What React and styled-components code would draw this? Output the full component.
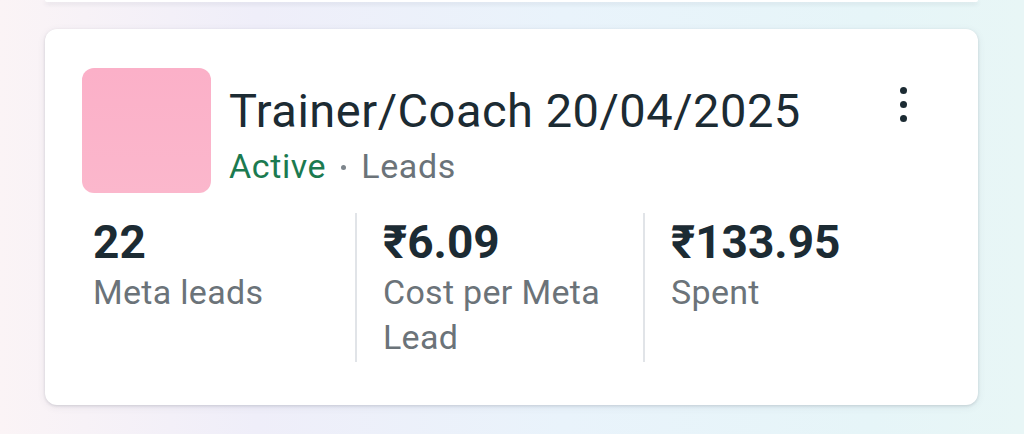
import styled, { createGlobalStyle } from "styled-components";

const GlobalStyle = createGlobalStyle`
  html, body {
    margin: 0;
    padding: 0;
  }
  body {
    font-family: Roboto, "Noto Sans", Arial, sans-serif;
    -webkit-font-smoothing: antialiased;
  }
`;

const stats = [
  { value: "22", label: "Meta leads" },
  { value: "₹6.09", label: "Cost per Meta Lead" },
  { value: "₹133.95", label: "Spent" },
];

function App() {
  return (
    <Page>
      <GlobalStyle />
      <PrevCard />
      <AdCard>
        <Header>
          <Thumb />
          <TitleBlock>
            <Title>Trainer/Coach 20/04/2025</Title>
            <Meta>
              <Status>Active</Status>
              <Dot />
              <span>Leads</span>
            </Meta>
          </TitleBlock>
          <MoreButton aria-label="More">
            <span />
            <span />
            <span />
          </MoreButton>
        </Header>

        <Stats>
          {stats.map((s) => (
            <Stat key={s.label}>
              <Value>{s.value}</Value>
              <Label>{s.label}</Label>
            </Stat>
          ))}
        </Stats>
      </AdCard>
    </Page>
  );
}

const Page = styled.div`
  width: 1024px;
  height: 434px;
  overflow: hidden;
  box-sizing: border-box;
  padding: 0 46px 0 45px;
  background: linear-gradient(90deg, #fbf4f6 0%, #efeef9 25%, #e9f3fb 55%, #e6f5f8 85%, #e8f6f6 100%);
  display: flex;
  flex-direction: column;
  gap: 27px;
`;

const PrevCard = styled.div`
  height: 2px;
  background: #fff;
  border-radius: 0 0 12px 12px;
  box-shadow: 0 2px 4px rgba(60, 70, 90, 0.14);
`;

const AdCard = styled.div`
  height: 376px;
  box-sizing: border-box;
  background: #fff;
  border-radius: 12px;
  box-shadow: 0 1px 3px rgba(60, 70, 90, 0.18), 0 2px 8px rgba(60, 70, 90, 0.08);
  padding: 39px 48px 0 37px;
  display: flex;
  flex-direction: column;
`;

const Header = styled.div`
  display: flex;
  align-items: flex-start;
`;

const Thumb = styled.div`
  width: 129px;
  height: 125px;
  flex-shrink: 0;
  border-radius: 12px;
  background: linear-gradient(180deg, #fbb0c8 0%, #fbb7cc 100%);
`;

const TitleBlock = styled.div`
  flex: 1;
  padding: 16px 0 0 18px;
  display: flex;
  flex-direction: column;
  gap: 8px;
`;

const Title = styled.div`
  font-size: 47px;
  line-height: 54px;
  color: #1c2b33;
  letter-spacing: 0.5px;
`;

const Meta = styled.div`
  display: flex;
  align-items: center;
  gap: 15px;
  font-size: 34px;
  line-height: 40px;
  letter-spacing: 0.6px;
  color: #6b7379;
`;

const Status = styled.span`
  color: #1b7a50;
`;

const Dot = styled.span`
  width: 5px;
  height: 5px;
  margin-top: 2px;
  border-radius: 50%;
  background: #7d858c;
`;

const MoreButton = styled.div`
  width: 16px;
  padding-top: 19px;
  margin-right: 19px;
  display: flex;
  flex-direction: column;
  align-items: center;
  gap: 7px;

  span {
    width: 7px;
    height: 7px;
    border-radius: 50%;
    background: #1c2b33;
  }
`;

const Stats = styled.div`
  margin: 20px 0 0 -15px;
  display: grid;
  grid-template-columns: repeat(3, 288px);
`;

const Stat = styled.div`
  min-height: 146px;
  padding: 3px 16px 0 26px;
  & + & {
    border-left: 2px solid #e1e4e8;
  }
`;

const Value = styled.div`
  font-size: 46px;
  line-height: 52px;
  font-weight: 700;
  color: #1c2b33;
`;

const Label = styled.div`
  margin-top: 2px;
  font-size: 34px;
  line-height: 45px;
  letter-spacing: 0.3px;
  color: #6b7379;
`;

export default App;
